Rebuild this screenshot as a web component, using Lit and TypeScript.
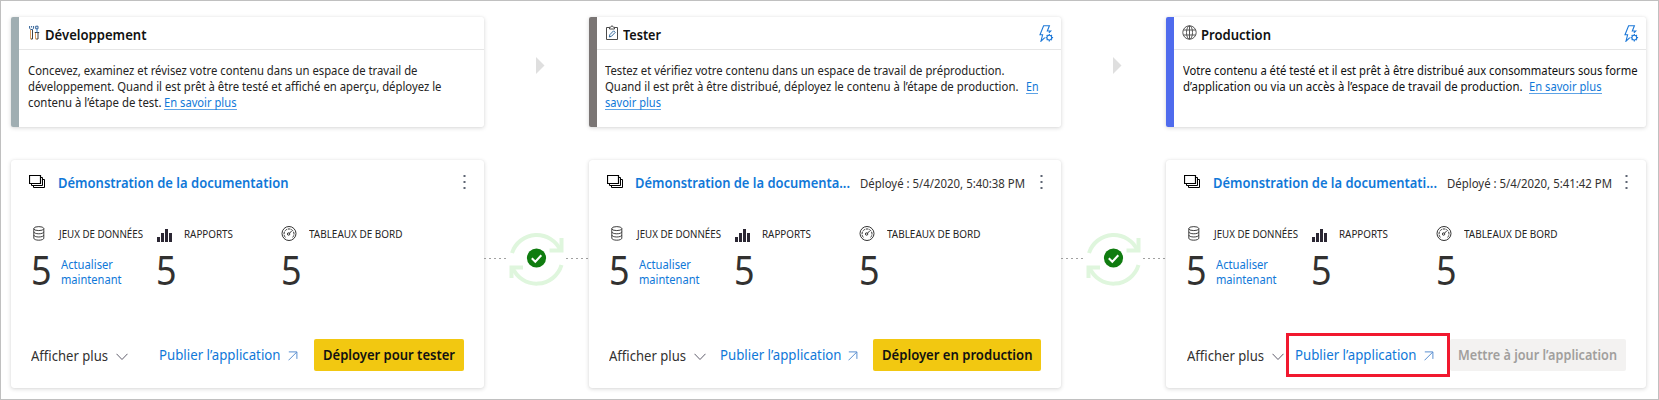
import { LitElement, html, css, svg, nothing } from 'lit';
import { customElement, property } from 'lit/decorators.js';

/** A single line of text, condensed or widened so that it spans the given width. */
@customElement('fit-text')
class FitText extends LitElement {
  @property() text = '';
  @property({ type: Number }) width = 0;
  static styles = css`
    :host { display: inline-block; white-space: pre; flex: none; }
    span { display: inline-block; transform-origin: 0 50%; }
  `;
  firstUpdated() {
    const el = this.renderRoot.querySelector('span') as HTMLElement;
    const natural = el.getBoundingClientRect().width;
    el.style.transform = `scaleX(${this.width / natural})`;
    this.style.width = `${this.width}px`;
  }
  render() { return html`<span>${this.text}</span>`; }
}

const fit = (text: string, width: number, cls = '') =>
  html`<fit-text class=${cls} .text=${text} .width=${width}></fit-text>`;

const icons = {
  tools: svg`<svg width="11" height="16" viewBox="0 0 11 16" fill="none" stroke-width="1">
    <path stroke="#e0a060" d="M1.500 4.500v9.500h1M6.500 8v6h1.500"/>
    <path stroke="#444" d="M3.500 4.500v9.500H2M9 8v6H7.500M5.800 7.500h4.400"/>
    <path stroke="#2f5f95" d="M.6 1v2.200l1.200 1.300h1.600l1.200-1.300V1M2.600 1v1.500M6.700 1.200h2.300v2.600H6.700z"/>
    <path stroke="#3a86d4" d="M8 4v3.500"/></svg>`,
  clipboard: svg`<svg width="12" height="16" viewBox="0 0 12 16" fill="none" stroke="#4b4b4b">
    <path d="M3.500 2.500h-3v12h11v-12h-3M3.500 4V2.200h1.200L6 .6l1.300 1.600h1.200V4z"/>
    <path stroke="#33689c" d="M3.300 12l.6-2.400 3.700-3.800 1.600 1.600-3.600 3.800z"/></svg>`,
  globe: svg`<svg width="15" height="16" viewBox="0 0 15 16" fill="none" stroke="#555" stroke-width="1">
    <circle cx="7.500" cy="7.500" r="6.700"/><ellipse cx="7.500" cy="7.500" rx="3" ry="6.700"/>
    <path d="M1.500 5h12M1.500 10h12M7.500 1v13"/></svg>`,
  flash: svg`<svg width="15" height="17" viewBox="0 0 15 17" fill="none" stroke="#1c78d8" stroke-width="1.100">
    <path d="M5.800 12.600 2 16.200 3.600 9.800H1L4.600 .8h5.800L8.300 6h3.400L9.900 7.800"/>
    <circle cx="10.300" cy="12.600" r="2.400" stroke-width="1.100"/>
    <path stroke-width="1.200" d="M10.300 8.900v1.200M10.300 15.100v1.300M6.600 12.600h1.200M12.800 12.600h1.300M7.700 10l.8.8M12.100 14.400l.8.800M12.900 10l-.8.800M8.500 14.400l-.8.800"/></svg>`,
  stack: svg`<svg width="17" height="14" viewBox="0 0 17 14" fill="none" stroke="#000">
    <path d="M.5.5h11v8H.5z" stroke-width="1.200"/><path d="M11.500 2.500h2v8h-11v-2M13.500 4.500h2v8h-11v-2"/></svg>`,
  database: svg`<svg width="12" height="15" viewBox="0 0 12 15" fill="none" stroke="#3f3f3f">
    <ellipse cx="5.800" cy="2.600" rx="5" ry="2"/>
    <path d="M.8 2.600v9.600c0 1.100 2.200 2 5 2s5-.9 5-2V2.600M.8 5.800c0 1.100 2.200 2 5 2s5-.9 5-2M.8 9c0 1.100 2.200 2 5 2s5-.9 5-2"/></svg>`,
  bars: svg`<svg width="15" height="13" viewBox="0 0 15 13" fill="#2b2733">
    <path d="M0 8h3v5H0zM4 4h3v9H4zM8 0h3v13H8zM12 4h3v9h-3z"/></svg>`,
  gauge: svg`<svg width="16" height="16" viewBox="0 0 16 16" fill="none" stroke="#333">
    <circle cx="8" cy="7.500" r="7"/>
    <path d="M4.400 11.400A5 5 0 1 1 11.600 11.400" stroke-dasharray="2.600 .8"/>
    <path d="M10.800 4.800 8.200 7.500"/><circle cx="7.600" cy="8" r="1.200"/></svg>`,
  dots: svg`<svg width="3" height="16" viewBox="0 0 3 16" fill="#5d6573">
    <path d="M.5 1h2v2h-2zM.5 7h2v2h-2zM.5 13h2v2h-2z"/></svg>`,
  chevron: svg`<svg width="12" height="8" viewBox="0 0 12 8" fill="none" stroke="#605e6c">
    <path d="M.5.8 6 6.500 11.500.8"/></svg>`,
  arrow: svg`<svg width="10" height="10" viewBox="0 0 10 10" fill="none" stroke="#5b8fd0">
    <path d="M.5 9.300 8.800 1M.8.900h8.100v7"/></svg>`,
  sync: svg`<svg width="56" height="56" viewBox="0 0 56 56" fill="none">
    <g stroke="#dff6dd" stroke-width="4">
      <path d="M3 23A26 26 0 0 1 51.500 20.500M52.500 35A26 26 0 0 1 3.500 37.500"/>
      <path d="M52.500 8V20.500H40.500M2.500 48V37.500H14"/>
    </g>
    <circle cx="27.500" cy="28" r="9.600" fill="#107c10"/>
    <path d="M22.800 28.200l3.500 3.500 6-6.500" stroke="#fff" stroke-width="2"/></svg>`,
};

interface Stage {
  key: string; name: string; nameW: number; icon: unknown; rule: boolean;
  lines: [string, number][][]; title: string; titleW: number;
  date?: [string, number]; action: string; actionW: number; outlined?: boolean;
}

// Each description line is a list of [text, width] runs.
const stages: Stage[] = [
  {
    key: 'dev', name: 'Développement', nameW: 101.5, icon: icons.tools, rule: false,
    lines: [
      [['Concevez, examinez et révisez votre contenu dans un espace de travail de', 389.5]],
      [['développement. Quand il est prêt à être testé et affiché en aperçu, déployez le', 413.5]],
      [['contenu à l’étape de test.', 133.5], ['En savoir plus', 72.5]],
    ],
    title: 'Démonstration de la documentation', titleW: 230.5,
    action: 'Déployer pour tester', actionW: 132,
  },
  {
    key: 'test', name: 'Tester', nameW: 38, icon: icons.clipboard, rule: true,
    lines: [
      [['Testez et vérifiez votre contenu dans un espace de travail de préproduction.', 399.5]],
      [['Quand il est prêt à être distribué, déployez le contenu à l’étape de production.', 413.5], ['En', 12.5]],
      [['savoir plus', 56]],
    ],
    title: 'Démonstration de la documenta...', titleW: 215,
    date: ['Déployé : 5/4/2020, 5:40:38 PM', 165],
    action: 'Déployer en production', actionW: 150.5,
  },
  {
    key: 'prod', name: 'Production', nameW: 70, icon: icons.globe, rule: true,
    lines: [
      [['Votre contenu a été testé et il est prêt à être distribué aux consommateurs sous forme', 454.5]],
      [['d’application ou via un accès à l’espace de travail de production.', 339.5], ['En savoir plus', 72.5]],
    ],
    title: 'Démonstration de la documentati...', titleW: 224,
    date: ['Déployé : 5/4/2020, 5:41:42 PM', 165],
    action: 'Mettre à jour l’application', actionW: 159, outlined: true,
  },
];

@customElement('stage-header')
class StageHeader extends LitElement {
  @property({ attribute: false }) stage!: Stage;
  static styles = css`
    :host { display: block; }
    .card { display: flex; height: 110px; background: #fff; border-radius: 2px; overflow: hidden;
      box-shadow: 0 1px 4px rgba(0,0,0,.16), 0 0 1px rgba(0,0,0,.1); }
    .stripe { width: 8px; flex: none; background: #a0aeb2; }
    .test .stripe { background: #7a7574; }
    .prod .stripe { background: #4f6bed; }
    .main { flex: 1; min-width: 0; }
    .top { display: flex; height: 32px; border-bottom: 1px solid #e6e6e6; padding: 0 7px 0 10px; }
    .icon { width: 16px; padding-top: 8px; flex: none; }
    .icon svg, .flash svg { display: block; }
    .test .icon { width: 17px; } .prod .icon { width: 19px; }
    .prod .top { padding-left: 8px; }
    .test .top { padding-left: 9px; }
    .name { font-size: 14px; font-weight: 600; color: #111; line-height: 18px; padding-top: 9px; }
    .flash { margin-left: auto; padding-top: 8px; }
    .body { padding: 13px 0 0 8.5px; font-size: 12px; line-height: 16px; color: #252423; }
    .test .body { padding-left: 8px; }
    .prod .body { color: #111; }
    .line { display: flex; gap: 3px; height: 16px; }
    .test .line, .prod .line { gap: 7px; }
    .link { color: #1078d8; height: 14px; line-height: 16px; border-bottom: 1px solid #5ea3e6; }
  `;
  render() {
    const s = this.stage;
    return html`<div class="card ${s.key}">
      <div class="stripe"></div>
      <div class="main">
        <div class="top">
          <div class="icon">${s.icon}</div>
          ${fit(s.name, s.nameW, 'name')}
          ${s.rule ? html`<div class="flash">${icons.flash}</div>` : nothing}
        </div>
        <div class="body">${s.lines.map(l => html`<div class="line">${l.map(([t, w]) =>
          fit(t, w, /^(En|En savoir plus|savoir plus)$/.test(t) ? 'link' : ''))}</div>`)}</div>
      </div>
    </div>`;
  }
}

@customElement('workspace-card')
class WorkspaceCard extends LitElement {
  @property({ attribute: false }) stage!: Stage;
  static styles = css`
    :host { display: block; }
    svg { display: block; }
    .card { box-sizing: border-box; display: flex; flex-direction: column; height: 228px; background: #fff;
      border-radius: 3px; padding: 0 20px 17px 18px;
      box-shadow: 0 1px 4px rgba(0,0,0,.16), 0 0 1px rgba(0,0,0,.1); }
    .head { display: flex; align-items: flex-start; height: 63px; }
    .stack { width: 28.5px; padding-top: 15px; flex: none; }
    .test .stack { width: 28px; }
    .title { font-size: 14px; font-weight: 560; line-height: 20px; padding-top: 13px; color: #1078d8; }
    .date { margin-left: auto; font-size: 12px; line-height: 20px; padding-top: 14px; color: #323130; }
    .dots { margin-left: auto; padding: 14px 0 0; margin-right: -1.5px; }
    .date + .dots { margin-left: 14.5px; }
    .prod .date + .dots { margin-left: 12.5px; }
    .metrics { display: grid; grid-template-columns: repeat(3, 125px); padding-left: 3px; }
    .label { display: flex; height: 22px; font-size: 11px; line-height: 16px; color: #252423; }
    .mi { width: 27px; flex: none; padding: 3px 0 0 1px; box-sizing: border-box; }
    .bars { padding: 6px 0 0 0; }
    .gauge { padding: 3px 0 0 0; margin-left: -1px; width: 28px; }
    .label fit-text { padding-top: 3px; }
    .value { display: flex; color: #323130; height: 48px; }
    .num { font-size: 40px; font-weight: 380; line-height: 48px; width: 26px; margin-left: -1px; padding-top: 1px; }
    .num span { display: inline-block; transform: scaleX(.9); transform-origin: 0 0; }
    .refresh { display: flex; flex-direction: column; font-size: 12px; line-height: 15px; color: #1078d8; padding: 12px 0 0 4px; }
    .foot { display: flex; align-items: center; margin-top: auto; height: 32px; padding-left: 2px; font-size: 14px; line-height: 20px; }
    .prod .foot { padding-left: 3px; }
    .more { color: #323130; padding-top: 2px; }
    .chev { padding: 3px 0 0 8px; }
    .publish { position: relative; display: flex; align-items: center; gap: 8px; margin-left: auto; margin-right: 16px; color: #1078d8; }
    .test .publish { gap: 6px; margin-right: 15px; }
    .publish svg { margin-top: 2px; }
    .mark { position: absolute; left: -9px; right: -16px; top: -12px; height: 38px; border: 3px solid #f1182f; }
    .button { height: 32px; line-height: 32px; padding: 0 9px; border-radius: 2px; background: #f2c811; color: #111; font-weight: 600; flex: none; }
    .prod .button { background: #f3f2f1; color: #a19f9d; padding: 0 9px 0 8px; }
  `;
  render() {
    const s = this.stage;
    const num = html`<div class="num"><span>5</span></div>`;
    return html`<div class="card ${s.key}">
      <div class="head">
        <div class="stack">${icons.stack}</div>
        ${fit(s.title, s.titleW, 'title')}
        ${s.date ? fit(s.date[0], s.date[1], 'date') : nothing}
        <div class="dots">${icons.dots}</div>
      </div>
      <div class="metrics">
        <div>
          <div class="label"><div class="mi">${icons.database}</div>${fit('JEUX DE DONNÉES', 84)}</div>
          <div class="value">${num}<div class="refresh">${fit('Actualiser', 52)}${fit('maintenant', 60.5)}</div></div>
        </div>
        <div>
          <div class="label"><div class="mi bars">${icons.bars}</div>${fit('RAPPORTS', 49)}</div>
          <div class="value">${num}</div>
        </div>
        <div>
          <div class="label"><div class="mi gauge">${icons.gauge}</div>${fit('TABLEAUX DE BORD', 93.5)}</div>
          <div class="value">${num}</div>
        </div>
      </div>
      <div class="foot">
        ${fit('Afficher plus', 77, 'more')}
        <div class="chev">${icons.chevron}</div>
        <div class="publish">${fit('Publier l’application', 121.5)}${icons.arrow}
          ${s.outlined ? html`<div class="mark"></div>` : nothing}</div>
        <div class="button">${fit(s.action, s.actionW)}</div>
      </div>
    </div>`;
  }
}

@customElement('app-root')
class AppRoot extends LitElement {
  static styles = css`
    :host { display: block; font-family: "Noto Sans", "Open Sans", sans-serif; }
    .page { box-sizing: border-box; width: 1659px; height: 400px; background: #fff; border: 1px solid #c0c0c0; padding: 16px 0 0 10px; overflow: hidden; }
    .row { display: grid; grid-template-columns: 473px 105px 472px 105px 480px; }
    .row + .row { margin-top: 33px; }
    .next { padding: 40px 0 0 52px; }
    .next svg { display: block; }
    .link { display: flex; align-items: center; height: 56px; margin-top: 70px; }
    .dash { flex: none; height: 1px; width: 23px; background: repeating-linear-gradient(90deg, #a0a0a0 0 2px, transparent 2px 5px); }
    .link svg { display: block; margin: 0 1px 0 2px; flex: none; }
  `;
  render() {
    return html`<div class="page">
      <div class="row">${stages.map((s, i) => html`
        ${i ? html`<div class="next"><svg width="9" height="17"><path d="M0 0 8.500 8.500 0 17z" fill="#dfdfdf"/></svg></div>` : nothing}
        <stage-header .stage=${s}></stage-header>`)}</div>
      <div class="row">${stages.map((s, i) => html`
        ${i ? html`<div class="link"><div class="dash"></div>${icons.sync}<div class="dash"></div></div>` : nothing}
        <workspace-card .stage=${s}></workspace-card>`)}</div>
    </div>`;
  }
}
